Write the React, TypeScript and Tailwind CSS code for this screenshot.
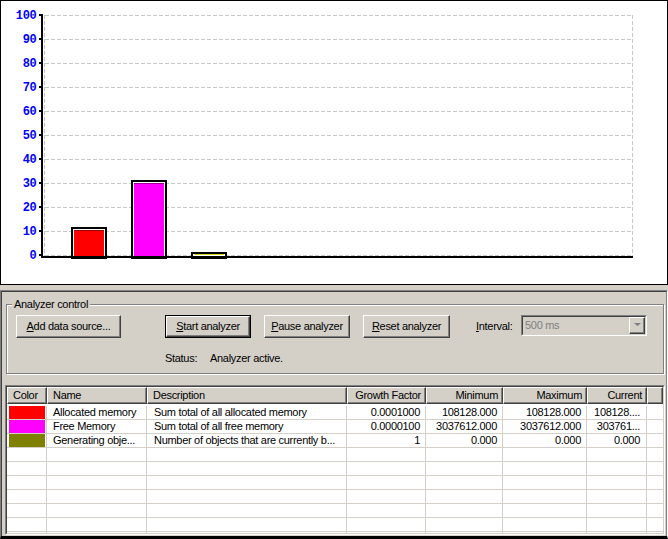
import React from "react";

type Row = {
  color: string;
  name: string;
  desc: string;
  growth: string;
  min: string;
  max: string;
  cur: string;
};

const rows: Row[] = [
  {
    color: "#ff0000",
    name: "Allocated memory",
    desc: "Sum total of all allocated memory",
    growth: "0.0001000",
    min: "108128.000",
    max: "108128.000",
    cur: "108128....",
  },
  {
    color: "#ff00ff",
    name: "Free Memory",
    desc: "Sum total of all free memory",
    growth: "0.0000100",
    min: "3037612.000",
    max: "3037612.000",
    cur: "303761...",
  },
  {
    color: "#808000",
    name: "Generating obje...",
    desc: "Number of objects that are currently b...",
    growth: "1",
    min: "0.000",
    max: "0.000",
    cur: "0.000",
  },
];

const ticks = [100, 90, 80, 70, 60, 50, 40, 30, 20, 10, 0];

function Chart() {
  return (
    <svg width={666} height={283} className="block">
      <g transform="translate(-1,-1)">
        {/* grid */}
        {ticks.map((t, i) => {
          const y = 15 + i * 24;
          return (
            <g key={t}>
              <line
                x1={45}
                x2={632}
                y1={y + 0.5}
                y2={y + 0.5}
                stroke="#c8c8c8"
                strokeDasharray="4 2"
              />
              <rect x={39} y={y - 1} width={2} height={2} fill="#000" />
              <text
                x={36.5}
                y={y + 4}
                textAnchor="end"
                fill="#0000ff"
                fontSize={12}
                fontWeight={700}
                fontFamily="'Liberation Mono', 'Courier New', monospace"
              >
                {t}
              </text>
            </g>
          );
        })}
        <line x1={44.5} x2={44.5} y1={15} y2={256} stroke="#c8c8c8" strokeDasharray="4 2" />
        <line x1={632.5} x2={632.5} y1={15} y2={256} stroke="#c8c8c8" strokeDasharray="4 2" />

        {/* bars */}
        <rect x={72} y={228} width={34} height={30} fill="#fff" stroke="#000" strokeWidth={2} />
        <rect x={74} y={230} width={30} height={26} fill="#ff0000" />
        <rect x={74} y={230} width={30} height={1} fill="#a00000" />

        <rect x={132} y={181} width={34} height={77} fill="#fff" stroke="#000" strokeWidth={2} />
        <rect x={134} y={183} width={30} height={73} fill="#ff00ff" />
        <rect x={134} y={183} width={30} height={1} fill="#a000a0" />

        <rect x={192} y={253} width={34} height={5} fill="#fff" stroke="#000" strokeWidth={2} />
        <rect x={194} y={254} width={30} height={1} fill="#d8d820" />

        {/* axes */}
        <rect x={41} y={14} width={2} height={244} fill="#000" />
        <rect x={41} y={256} width={592} height={2} fill="#000" />
      </g>
    </svg>
  );
}

function Btn({
  children,
  width,
  isDefault,
}: {
  children: React.ReactNode;
  width: string;
  isDefault?: boolean;
}) {
  const inner = (
    <div className="flex h-full w-full items-center justify-center border border-t-white border-l-white border-r-[#404040] border-b-[#404040] bg-[#d4d0c8] shadow-[inset_-1px_-1px_0_#808080]">
      {children}
    </div>
  );
  if (isDefault) {
    return <div className={`h-[23px] border border-black ${width}`}>{inner}</div>;
  }
  return <div className={`h-[23px] ${width}`}>{inner}</div>;
}

const cols = [
  { label: "Color", w: "w-[40px]", right: false },
  { label: "Name", w: "w-[100px]", right: false },
  { label: "Description", w: "w-[200px]", right: false },
  { label: "Growth Factor", w: "w-[79px]", right: true },
  { label: "Minimum", w: "w-[77px]", right: true },
  { label: "Maximum", w: "w-[84px]", right: true },
  { label: "Current", w: "w-[60px]", right: true },
];

function DataTable() {
  const blank = Array.from({ length: 7 });
  return (
    <div className="ml-[3px] mt-[11px] h-[150px] w-[660px] border border-t-[#808080] border-l-[#808080] border-r-white border-b-white">
      <div className="h-full w-full overflow-hidden border border-t-[#404040] border-l-[#404040] border-r-[#d4d0c8] border-b-[#d4d0c8] bg-white">
        {/* header */}
        <div className="flex h-[17px]">
          {cols.map((c) => (
            <div
              key={c.label}
              className={`${c.w} flex shrink-0 items-center border border-t-white border-l-white border-r-[#404040] border-b-[#404040] bg-[#d4d0c8] shadow-[inset_-1px_-1px_0_#808080] ${
                c.right ? "justify-end pr-[4px]" : "pl-[5px]"
              }`}
            >
              {c.label}
            </div>
          ))}
          <div className="flex-1 border border-t-white border-l-white border-r-[#404040] border-b-[#404040] bg-[#d4d0c8] shadow-[inset_-1px_-1px_0_#808080]" />
        </div>
        {/* body */}
        <div className="pt-[2px]">
          {rows.map((r) => (
            <div key={r.name} className="flex h-[14px] border-b border-[#d4d0c8]">
              <div className="flex w-[40px] shrink-0 items-stretch border-r border-[#d4d0c8] pl-[2px] pr-[1px]">
                <div className="w-full" style={{ backgroundColor: r.color }} />
              </div>
              <div className="w-[100px] shrink-0 overflow-hidden whitespace-nowrap border-r border-[#d4d0c8] pl-[6px]">{r.name}</div>
              <div className="w-[200px] shrink-0 overflow-hidden whitespace-nowrap border-r border-[#d4d0c8] pl-[7px]">{r.desc}</div>
              <div className="w-[79px] shrink-0 border-r border-[#d4d0c8] pr-[5px] text-right">{r.growth}</div>
              <div className="w-[77px] shrink-0 border-r border-[#d4d0c8] pr-[5px] text-right">{r.min}</div>
              <div className="w-[84px] shrink-0 border-r border-[#d4d0c8] pr-[5px] text-right">{r.max}</div>
              <div className="w-[60px] shrink-0 border-r border-[#d4d0c8] pr-[6px] text-right">{r.cur}</div>
              <div className="flex-1" />
            </div>
          ))}
          {blank.map((_, i) => (
            <div key={i} className="flex h-[14px] border-b border-[#d4d0c8]">
              <div className="w-[40px] shrink-0 border-r border-[#d4d0c8]" />
              <div className="w-[100px] shrink-0 border-r border-[#d4d0c8]" />
              <div className="w-[200px] shrink-0 border-r border-[#d4d0c8]" />
              <div className="w-[79px] shrink-0 border-r border-[#d4d0c8]" />
              <div className="w-[77px] shrink-0 border-r border-[#d4d0c8]" />
              <div className="w-[84px] shrink-0 border-r border-[#d4d0c8]" />
              <div className="w-[60px] shrink-0 border-r border-[#d4d0c8]" />
              <div className="flex-1" />
            </div>
          ))}
        </div>
      </div>
    </div>
  );
}

export default function App() {
  return (
    <div className="h-[539px] w-[668px] overflow-hidden bg-[#d4d0c8] font-['Liberation_Sans',Arial,sans-serif] text-[11px] leading-[13px] tracking-[-0.3px] text-black">
      {/* Chart */}
      <div className="h-[285px] w-[668px] border border-black bg-white">
        <Chart />
      </div>

      {/* Lower panel */}
      <div className="mt-[5px] h-[249px] border border-t-[#808080] border-l-[#808080] border-r-white border-b-[3px] border-b-black">
        <div className="h-full border border-b-0 border-t-[#404040] border-l-[#404040] border-r-[#808080]">
          {/* Group box */}
          <div className="relative ml-[4px] mt-[12px] h-[70px] w-[658px] border border-[#808080] shadow-[inset_1px_1px_0_#fff,1px_1px_0_#fff]">
            <span className="absolute -top-[7px] left-[5px] bg-[#d4d0c8] px-[2px]">Analyzer control</span>
            <div className="ml-[9px] mt-[10px] flex items-start">
              <Btn width="w-[105px]">
                <span>
                  <u>A</u>dd data source...
                </span>
              </Btn>
              <div className="ml-[44px]">
                <Btn width="w-[86px]" isDefault>
                  <span>
                    <u>S</u>tart analyzer
                  </span>
                </Btn>
              </div>
              <div className="ml-[13px]">
                <Btn width="w-[86px]">
                  <span>
                    <u>P</u>ause analyzer
                  </span>
                </Btn>
              </div>
              <div className="ml-[13px]">
                <Btn width="w-[87px]">
                  <span>
                    <u>R</u>eset analyzer
                  </span>
                </Btn>
              </div>
              <div className="ml-[26px] flex h-[23px] w-[45px] items-center">
                <span>
                  <u>I</u>nterval:
                </span>
              </div>
              <div className="h-[21px] w-[126px] border border-t-[#808080] border-l-[#808080] border-r-white border-b-white">
                <div className="flex h-full items-center border border-t-[#404040] border-l-[#404040] border-r-[#d4d0c8] border-b-[#d4d0c8] bg-[#d4d0c8]">
                  <span className="flex-1 pl-[2px] text-[#808080]">500 ms</span>
                  <div className="flex h-[17px] w-[16px] items-center justify-center border border-t-white border-l-white border-r-[#404040] border-b-[#404040] shadow-[inset_-1px_-1px_0_#808080]">
                    <svg width={7} height={5} viewBox="0 0 7 5">
                      <polygon points="1,1 6,1 3.5,4" fill="#fff" />
                      <polygon points="0,0 7,0 3.5,3.5" fill="#808080" />
                    </svg>
                  </div>
                </div>
              </div>
            </div>
            <div className="ml-[158px] mt-[14px] flex">
              <span className="w-[45px]">Status:</span>
              <span>Analyzer active.</span>
            </div>
          </div>

          <DataTable />
        </div>
      </div>
    </div>
  );
}
